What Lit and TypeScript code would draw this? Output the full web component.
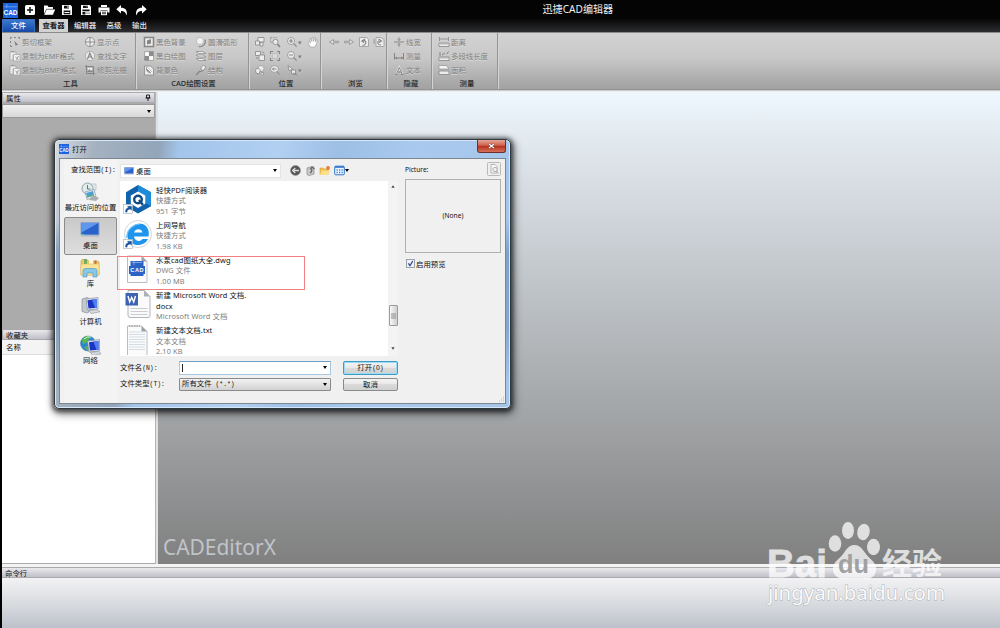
import { LitElement, html, css, svg } from "lit";
import { customElement } from "lit/decorators.js";

const icon = (w: number, h: number, body: unknown, box = `0 0 ${w} ${h}`) =>
  html`<svg width=${w} height=${h} viewBox=${box} fill="none">${body}</svg>`;

/* quick access bar, 12 x 12 white glyphs */
const quick = [
  svg`<rect x="1" y="1" width="10" height="10" rx="1.5" fill="#fff"/><path d="M6 3v6M3 6h6" stroke="#111" stroke-width="1.5"/>`,
  svg`<path d="M1 10V1.500h3.500l1 1.500H10V5H3.500z" fill="#fff"/><path d="M3.400 5.200H12.400L10 11H1z" fill="#fff" stroke="#111" stroke-width=".4"/>`,
  svg`<path d="M1 1h8.500L11 2.500V11H1z" fill="#fff"/><path d="M3 1.800h5v2.700H3zM2.700 6.500h6.600v3.800H2.700z" fill="#111"/><path d="M6.500 2h1v2h-1zM3.500 8h5v1h-5z" fill="#fff"/>`,
  svg`<path d="M1 1h8.500L11 2.500V11H1z" fill="#fff"/><path d="M3 1.800h5v2.200H3zM2.400 5.600h7.200v1.600H2.400zM2.400 8h3v2.400h-3z" fill="#111"/><path d="M6.500 2h1v1.600h-1zM6 8.500h4v1.500H6z" fill="#aaa"/>`,
  svg`<path d="M3 1h6v2H3zM.5 3.600h11v5H9.400V6.500H2.600v2.100H.5z" fill="#fff"/><path d="M3 7h6v4.200H3z" fill="#fff"/><path d="M4 8.200h4M4 9.700h4" stroke="#111" stroke-width=".8"/>`,
  svg`<path d="M5 1v2.700C9 3.700 11.800 6 10.700 11.500 9.500 8 8 6.900 5 6.900v2.700L.3 5.200z" fill="#fff"/>`,
  svg`<path d="M7 1v2.700C3 3.700.200 6 1.300 11.500 2.500 8 4 6.900 7 6.900v2.700l4.700-4.400z" fill="#fff"/>`,
];

const L = "#ececec";
const D = "#858585";
const g = {
  crop: svg`<path d="M1.500 3V1.500H3M5 1.500h2M9 1.500h1.500V3M1.500 5v2M1.500 9v1.500H3" stroke="${D}"/><path d="M4.500 3.500l6 6-2.500-.2L6.500 11z" fill="${D}" stroke="${L}" stroke-width=".5"/>`,
  copy: svg`<path d="M1 2h6v3H4v5H1z" fill="${L}" stroke="#999" stroke-width=".6"/><path d="M4.500 4.500h6.500V11H4.500z" fill="#f2f2f2" stroke="#999" stroke-width=".6"/><path d="M2 1.500h3M6.500 7l3 2.500M9.500 6l-2 4" stroke="#999"/>`,
  point: svg`<circle cx="6" cy="6" r="4.600" fill="${L}" stroke="${D}" stroke-width=".8"/><path d="M6 1v10M1 6h10" stroke="${D}" stroke-width=".9"/>`,
  find: svg`<circle cx="6" cy="6" r="4.700" fill="${L}" stroke="#999" stroke-width=".7"/><path d="M3.500 9L5.800 3l2.700 6M4.500 7h3" stroke="${D}" stroke-width="1.200"/>`,
  raster: svg`<path d="M2.500 1v8.500H11M1 2.500h8.500V11" stroke="${D}"/><path d="M4 4h4v4H4z" fill="${L}"/><path d="M3 8l2.500-3L7 7l1-1 1 2z" fill="${D}"/>`,
  black: svg`<path d="M1.500 1.500h9v9h-9z" fill="${L}" stroke="${D}" stroke-width="1.500"/><path d="M4 8.500V4.500L8 3v4.500z" fill="${D}"/>`,
  bw: svg`<path d="M1.500 1.500h9v9h-9z" fill="#f4f4f4" stroke="#a8a8a8"/><path d="M6 1.500h4.500V6H6zM1.500 6H6v4.500H1.500z" fill="#8c8c8c"/><path d="M3 3h2v2H3zM8 7h2v2H8z" fill="#fff"/>`,
  bg: svg`<path d="M1.500 2h6l3 3v6h-9z" fill="${L}" stroke="${D}" stroke-width=".8"/><path d="M3 3c2 0 2 2 4 3s2 2 1 3-4-1-5-3z" fill="#999"/><path d="M4 4l5 5" stroke="#fff"/>`,
  arc: svg`<circle cx="5" cy="5" r="3.600" fill="#f2f2f2" stroke="#b2b2b2" stroke-width=".8"/><path d="M10 3.500c1.500 4-2 8-6.500 7" stroke="${D}" stroke-width="1.100"/>`,
  layers: svg`<path d="M1 1.500h7l3 2H4zM1 5h7l3 2H4zM1 8.500h7l3 2H4z" fill="#f2f2f2" stroke="${D}" stroke-width=".7"/>`,
  struct: svg`<path d="M1 11l4-4M4 8l3-1 2-3" stroke="${D}" stroke-width="1.300"/><path d="M5.500 4l3-3 2.500 2-3 4z" fill="${L}" stroke="${D}" stroke-width=".8"/>`,
  sheets: svg`<path d="M4 1.500h6V6H4z" fill="${L}" stroke="${D}" stroke-width=".8"/><path d="M1.500 5h4v4h-4zM6 6.500h3V10H6z" fill="${L}" stroke="${D}" stroke-width=".8"/>`,
  sheets2: svg`<path d="M1.500 1.500h5v4h-5z" fill="${L}" stroke="${D}" stroke-width=".8"/><path d="M5 5h5.500v5.500H5z" fill="${L}" stroke="${D}" stroke-width=".8"/><path d="M8 1.500l2 2M3 7v2" stroke="${D}"/>`,
  turn: svg`<circle cx="7" cy="4.500" r="3" fill="${L}" stroke="#999" stroke-width=".7"/><path d="M1.500 6c1-2 3-2 5 0L5 10 2 9zM7 8l3 1-1 2" fill="${L}" stroke="${D}" stroke-width=".8"/>`,
  zoomBox: svg`<path d="M1.500 1.500h6v5h-6z" stroke="#999" stroke-dasharray="1.500 1"/><circle cx="6.500" cy="6" r="2.600" fill="${L}" stroke="${D}" stroke-width=".8"/><path d="M8.500 8l2.500 3" stroke="${D}" stroke-width="1.500"/>`,
  fit: svg`<path d="M3.500 3.500h5v5h-5z" fill="#d8d8d8" stroke="#aaa" stroke-width=".5"/><path d="M1.500 4V1.500H4M8 1.500h2.500V4M10.500 8v2.500H8M4 10.500H1.500V8" stroke="${D}" stroke-width="1.100"/>`,
  zoomPrev: svg`<ellipse cx="5.500" cy="5" rx="4" ry="3.400" fill="${L}" stroke="#999" stroke-width=".9"/><path d="M3.500 5h4M5 3.500L3.500 5 5 6.500M8 7.500l2.500 3" stroke="${D}"/>`,
  plus: svg`<circle cx="5" cy="5" r="3.500" fill="${L}" stroke="#999" stroke-width=".9"/><path d="M3 5h4M5 3v4M7.700 7.700l3 3" stroke="${D}" stroke-width="1.200"/>`,
  minus: svg`<circle cx="5" cy="5" r="3.500" fill="${L}" stroke="#999" stroke-width=".9"/><path d="M3 5h4M7.700 7.700l3 3" stroke="${D}" stroke-width="1.200"/>`,
  pick: svg`<path d="M2 1.500l5 4-4 1z" fill="${L}" stroke="${D}" stroke-width=".8"/><path d="M5.500 6h4v4h-4z" fill="${L}" stroke="${D}" stroke-width=".8"/><path d="M7 9l4 2" stroke="${D}"/>`,
  hand: svg`<path d="M3.500 11L1 6.500l1-.8L3.500 7 2.700 2.700l1.100-.3 1.100 3L5 1.300h1.200l.4 4 1-3.600 1.100.3-.3 4 1.300-2.600 1 .5L9.300 8 8 11z" fill="#fff" stroke="#999" stroke-width=".6"/>`,
  left: svg`<path d="M10.500 5.300H5.500V3.500L1.500 6l4 2.500V6.700h5z" fill="#dedede" stroke="${D}" stroke-width=".7"/>`,
  right: svg`<path d="M1.500 5.300h5V3.500l4 2.500-4 2.500V6.700h-5z" fill="#dedede" stroke="${D}" stroke-width=".7"/>`,
  rotL: svg`<path d="M1.500 1.500h7l2 2v7h-9z" fill="${L}" stroke="#999" stroke-width=".8"/><path d="M4.500 9.500C8 9 9 6 6.500 4.500L5 5M7 3L4 5l2 1.500" stroke="${D}" stroke-width="1.200"/>`,
  rotR: svg`<path d="M3 1.500h5l3 2v7H3z" fill="${L}" stroke="#999" stroke-width=".8"/><path d="M8 9C4 9 4 5 6.500 4.800M5.500 3l3 2-2.500 1.500" stroke="${D}" stroke-width="1.100"/><path d="M1 3v5" stroke="#999"/>`,
  lw: svg`<path d="M1 6h10M6 1.500v3M6 7.500v3" stroke="${D}" stroke-width="1.100"/><path d="M4.500 3L6 4.700 7.500 3M4.500 9L6 7.300 7.500 9" stroke="${D}" stroke-width=".6"/>`,
  meas: svg`<path d="M1.500 3v6.500M10.500 3v6.500M2 8h8" stroke="${D}"/><path d="M2 8l2-1.500v3zM10 8L8 6.500v3z" fill="${D}"/>`,
  text: svg`<path d="M3.500 10L6.300 3.500 9.200 10" stroke="${L}" stroke-width="2"/><path d="M3.500 10L6.300 3.500 9.200 10M4.600 8h3.600M2.500 10.500h2.200M7.800 10.500h2.700" stroke="${D}"/>`,
  dist: svg`<path d="M1.500 1v4M10.500 1v4M2 3h8" stroke="${D}" stroke-width=".8"/><path d="M1 7h10v3.500H1z" fill="${L}" stroke="${D}" stroke-width=".8"/><path d="M3 7v2M5 7v2M7 7v2M9 7v2" stroke="#999" stroke-width=".6"/>`,
  poly: svg`<path d="M2 6V2M4 5l3-2M9 4l1.500-2.500" stroke="${D}"/><path d="M1 7h10v3.500H1z" fill="${L}" stroke="${D}" stroke-width=".8"/><path d="M3 7v2M5 7v2M7 7v2M9 7v2" stroke="#999" stroke-width=".6"/>`,
  area: svg`<path d="M1 1.500h7.500L11 5H1z" fill="#f4f4f4" stroke="${D}" stroke-width=".6"/><path d="M1 7h10v3.500H1z" fill="${L}" stroke="${D}" stroke-width=".8"/>`,
};

type Cell = [keyof typeof g, string?] | null;
const groups: { name: string; cls: string; cells: Cell[] }[] = [
  { name: "工具", cls: "g1", cells: [["crop", "剪切框架"], ["point", "显示点"], ["copy", "复制为EMF格式"], ["find", "查找文字"], ["copy", "复制为BMP格式"], ["raster", "修剪光栅"]] },
  { name: "CAD绘图设置", cls: "g2", cells: [["black", "黑色背景"], ["arc", "圆滑弧形"], ["bw", "黑白绘图"], ["layers", "图层"], ["bg", "背景色"], ["struct", "结构"]] },
  { name: "位置", cls: "g3", cells: [["sheets"], ["zoomBox"], ["plus", "▾"], ["hand"], ["sheets2"], ["fit"], ["minus", "▾"], null, ["turn"], ["zoomPrev"], ["pick", "▾"], null] },
  { name: "浏览", cls: "g4", cells: [["left"], ["right"], ["rotL"], ["rotR"]] },
  { name: "隐藏", cls: "g5", cells: [["lw", "线宽"], ["meas", "测量"], ["text", "文本"]] },
  { name: "测量", cls: "g6", cells: [["dist", "距离"], ["poly", "多段线长度"], ["area", "面积"]] },
];

const monitor = svg`<path d="M1 1h18v12.500H1z" fill="#2a62cc" stroke="#8fa6c8"/><path d="M1.500 1.500h17L1.500 11z" fill="#5f96ee"/><path d="M1 14.500h18" stroke="#a9b6c8"/><path d="M2 13h2" stroke="#4ee08a"/>`;
const tower = svg`<path d="M2 3l5-1.500 2 1V16l-2 1-5-1.500z" fill="#c3c8cf" stroke="#7d848e" stroke-width=".6"/>`;
const crt = svg`<path d="M6 3l12-1.500V13L7.500 14z" fill="#e0e5ec" stroke="#8a919c" stroke-width=".7"/><path d="M7.500 4.200L17 3v8.800L8.500 12.600z" fill="#1a34c4"/><path d="M12 3.600l5-.6v8.800l-2 .2z" fill="#4f80f0"/><path d="M9 14.500l8-1 3 2.300-9 1.700z" fill="#d7dbe0" stroke="#8a919c" stroke-width=".6"/>`;
const places = [
  { name: "最近访问的位置", art: svg`<path d="M11 2h5v6h-5z" fill="#e4eaf0" stroke="#9aa4b0" stroke-width=".5"/><circle cx="7.500" cy="6.500" r="5.500" fill="#dfecea" stroke="#8fa3ad"/><path d="M7.500 3v4h3" stroke="#5c7a88"/><path d="M5 10l9-2.500 2 7-9 3z" fill="#e8eef4" stroke="#8d99a6" stroke-width=".7"/><path d="M6 11l7-2 1.200 4.500-7 2z" fill="#4e9ed8"/><path d="M6.800 14l6.500-1.800.4 1.300-6.500 2z" fill="#58b06a"/><path d="M13 13l6 3-3 3-7-1z" fill="#a9adb4"/>` },
  { name: "桌面", art: svg`<g transform="translate(0 1.500)">${monitor}</g>`, sel: true },
  { name: "库", art: svg`<path d="M1 3l1-1.500h5L8 3h9l2 1v13H1z" fill="#eccb68" stroke="#c39a38" stroke-width=".6"/><path d="M4 1h3v5H4z" fill="#6fae62"/><path d="M9 2h4v4H9z" fill="#fff6d8"/><path d="M14.500 2.500h2V6h-2z" fill="#c9644a"/><path d="M1 6h18v11H1z" fill="#f8e397" stroke="#d8b455" stroke-width=".5"/><path d="M3 19v-6q0-2.500 2.500-2.500h9q2.500 0 2.500 2.500v6h-4v-4H7v4z" fill="#86c8ea" stroke="#5194c0" stroke-width=".6"/>` },
  { name: "计算机", art: svg`${tower}${crt}` },
  { name: "网络", art: svg`<circle cx="8" cy="8.500" r="7.500" fill="#2f86cf" stroke="#3a6fa8" stroke-width=".5"/><path d="M2 5c2-4 6-5 9-3L8 5 6 8 3 9zM4 12l4-1 2 4-2 1z" fill="#59b947"/><path d="M4 4q3-3 7-2" stroke="#cdeaf8"/><g transform="translate(1.500 3)">${crt}</g>` },
];

const shortcut = svg`<rect x=".5" y="20.500" width="9" height="9" fill="#fff" stroke="#b0b8c0" stroke-width=".7"/><path d="M2.500 28c0-3 1-4 3-4.300l-1-1.500H8.500v4L7.200 25C5 25.500 4 26 4 28.300z" fill="#17509c" stroke="#17509c" stroke-width=".4"/>`;
const page = (y: number, h: number) => svg`<path d="M4.500 ${y}h14l5.500 5.500v${h - 5.5}H4.500z" fill="#fbfbfb" stroke="#a8adb4" stroke-width=".8"/><path d="M18.500 ${y}l5.500 5.500h-5.500z" fill="#9aa0a8"/>`;
const files = [
  { lines: ["轻快PDF阅读器"], meta: ["快捷方式", "951 字节"], art: svg`<path d="M15 1l13 7.300v14L15 29.500 3 22.500V8.300z" fill="#0f62ab"/><path d="M15 1l13 7.300v14l-6-3.500V12L15 8z" fill="#1d8bd8"/><path d="M15 7.500l7.300 4v8.200L15 24l-7.200-4.300v-8.200z" fill="#fff"/><circle cx="15" cy="15.500" r="3.800" stroke="#0f4a85" stroke-width="2.400"/><path d="M16 16l4 5" stroke="#0f4a85" stroke-width="2.400"/>${shortcut}` },
  { lines: ["上网导航"], meta: ["快捷方式", "1.98 KB"], art: svg`<circle cx="15" cy="15" r="13.500" fill="#fff" stroke="#c8ccd2" stroke-width=".8"/><path d="M25.500 17.500H11c.6 5 6.500 5.700 8.500 2.500h5.500C22 28 6 29 4.300 17 4 5 22-.5 25.300 11c.6 2.500.6 4 .2 6.500zM11 13.500h8.500c-.6-4.500-7.500-4.500-8.500 0z" fill="#1f94ec"/><path d="M3.800 19C3 10 12 5 17 5" stroke="#6cc4ff" stroke-width="1.200"/>${shortcut}` },
  { lines: ["水泵cad图纸大全.dwg"], meta: ["DWG 文件", "1.00 MB"], art: svg`${page(2, 26.5)}<path d="M7.500 7h13v15h-13z" fill="#2c62c4"/><path d="M9 8.500h10M11 7v4" stroke="#9fc0f2" stroke-width=".7"/><path d="M6 12h16v8H6z" fill="#2c62c4"/><text x="7.300" y="18.300" font-size="5.600" font-weight="700" fill="#fff" textLength="13.400" font-family="Liberation Sans">CAD</text>` },
  { lines: ["新建 Microsoft Word 文档.", "docx"], meta: ["Microsoft Word 文档"], art: svg`<path d="M5 1.500h16.500L27 7.500v19q0 2-2 2H7q-2 0-2-2z" fill="#fafafa" stroke="#a8adb4" stroke-width=".9"/><path d="M21 1.500v6h6z" fill="#aab0b8"/><path d="M7.500 19.500h17M7.500 22.500h17M7.500 25.500h17" stroke="#c4c8cc" stroke-width=".9"/><path d="M2.500 4h12.500v12.500H2.500z" fill="#3c63b4"/><path d="M5 7l1.700 6 2-4.500 2 4.500L12.500 7" stroke="#fff" stroke-width="1.400"/>` },
  { lines: ["新建文本文档.txt"], meta: ["文本文档", "2.10 KB"], art: svg`${page(2, 30)}<path d="M6 8h16M6 10.500h16M6 13h16M6 15.500h16M6 18h16M6 20.500h16M6 23h16M6 25.500h16" stroke="#c9d4e0" stroke-width=".8"/><path d="M6 2h11" stroke="#888" stroke-dasharray="1.500 1"/>` },
];

const cadLogo = (s: number) => icon(s, s, svg`<rect width="16" height="16" fill="#1c63dd"/><path d="M1 4h14M4 1v14" stroke="#79adff" stroke-width=".8"/><rect y="5.500" width="16" height="8" fill="#1c63dd"/><text x=".5" y="12.300" font-size="7.500" font-weight="700" textLength="15" lengthAdjust="spacingAndGlyphs" fill="#fff" font-family="Liberation Sans">CAD</text>`, "0 0 16 16");
const arrow = html`<i class="arrow"></i>`;

@customElement("app-root")
export class AppRoot extends LitElement {
  static styles = css`
    :host { display: block; position: relative; width: 1000px; height: 628px; overflow: hidden; background: #000; color: #111; font: 7.4px/10px "Noto Sans", "Noto Sans CJK SC", sans-serif; white-space: nowrap; }
    * { box-sizing: border-box; }
    svg { display: block; flex: none; }
    .app { display: flex; flex-direction: column; height: 628px; padding-left: 2px; }
    .title { display: grid; grid-template-columns: 152px 1fr; height: 19px; align-items: center; background: #040404; }
    .quick { display: flex; align-items: center; gap: 6.4px; padding: 1px 0 0 1px; }
    .caption { color: #eee; font-size: 10.1px; line-height: 19px; padding-left: 388.5px; }
    .tabs { display: flex; height: 13px; background: linear-gradient(#070707, #2c2d30); color: #e8e8e8; line-height: 13px; font-weight: 500; }
    .tab { text-align: center; }
    .file { width: 33px; background: linear-gradient(#3b78d0, #1549a4); color: #fff; border: 1px solid #3a6fc0; border-bottom: 0; line-height: 11.500px; }
    .current { width: 29px; margin-left: 4px; background: #d2d2d2; color: #222; font-weight: 700; }
    .t3 { width: 34px; } .t4 { width: 24px; } .t5 { width: 27px; }
    .ribbon { display: flex; height: 57px; background: linear-gradient(#d3d3d3, #c8c8c8 45%, #a9a9a9 88%, #a2a2a2); border-top: 1px solid #8a8a8a; }
    .group { display: flex; flex-direction: column; justify-content: space-between; border-right: 1px solid #959595; box-shadow: 1px 0 #d4d4d4; padding-top: 2px; }
    .cells { display: grid; grid-auto-rows: 14px; align-items: center; color: #7f7f7f; }
    .cell { display: flex; align-items: center; gap: 1px; text-shadow: 0 .5px #ddd; }
    .name { text-align: center; color: #2a2a2a; line-height: 11px; font-weight: 500; }
    .g1 { width: 134px; } .g1 .cells { grid-template-columns: 75px 1fr; padding-left: 7px; letter-spacing: .1px; } .g1 .name { padding-left: 4px; }
    .g2 { width: 113px; } .g2 .cells { grid-template-columns: 52px 1fr; padding-left: 7px; } .g2 .name { padding-left: 3px; }
    .g3 { width: 72px; } .g3 .cells { grid-template-columns: 15px 17px 21px 12px; padding-left: 5px; } .g3 .name { padding-left: 3px; }
    .g4 { width: 66px; } .g4 .cells { grid-template-columns: repeat(4, 15px); padding-left: 7px; } .g4 .name { padding-left: 4px; }
    .g5 { width: 45px; } .g5 .cells { padding-left: 6px; } .g5 .name { padding-left: 4px; }
    .g6 { width: 66px; } .g6 .cells { padding-left: 6px; } .g6 .name { padding-left: 5px; }
    .g3 .cell { gap: 0; }
    .edge { height: 3px; background: linear-gradient(#777, #eee 70%); }
    .body { display: flex; height: 472px; background: #dfe1e4; }
    .side { display: flex; flex-direction: column; width: 154px; border-right: 1px solid #b4b4b4; background: #ababab; }
    .bar { display: flex; justify-content: space-between; align-items: center; height: 11px; padding: 0 3px; border: 1px solid #a9a9ae; background: linear-gradient(#e9e9ed, #bfc0c8); flex: none; }
    .drop { display: flex; align-items: center; justify-content: flex-end; height: 14px; margin-top: 1px; padding-right: 3px; border: 1px solid #999; background: linear-gradient(#f0f0f0, #d8d8d8); }
    .arrow { display: block; width: 0; height: 0; border: 2.5px solid transparent; border-top: 3px solid #000; border-bottom: 0; }
    .props { height: 211px; }
    .cols { height: 15px; padding: 2px 4px; background: #f4f4f5; border-bottom: 1px solid #dcdcdc; }
    .favs { flex: 1; background: #fff; border-bottom: 1px solid #aaa; }
    .canvas { display: flex; flex: 1; margin-left: 2px; align-items: flex-end; padding: 0 5px 2px; background: linear-gradient(#eff8ff, #dfe6ec 12%, #808080); color: #c0c4c9; font-size: 22.5px; line-height: 30px; }
    .brand { transform: scaleX(.93); transform-origin: left; }
    .cmdbar { height: 11px; border-width: 1px 0; }
    .cmd { flex: 1; background: linear-gradient(#f2f2f4, #d9dcdf 50%, #bdc1cb); }
    .split { height: 3px; background: #f4f4f4; }

    .dialog { position: absolute; left: 54px; top: 139px; width: 457px; height: 270px; border: 1px solid #30383f; border-radius: 5px; padding: 0 4px 4px; background: linear-gradient(#0000 30%, #5a84b088 42%, #6a90b888 70%, #9fc4ea00 90%), linear-gradient(100deg, #d5dbe2 0, #a5b2c0 8%, #92a5ba 21%, #a3c5ea 25%, #b1d0f2 45%, #9dbfe4 57%, #a9caee 72%, #a4c4e8 100%); box-shadow: inset 0 0 0 1px #d5e7f8, 0 1px 4px 2px #0008, 1px 3px 9px 2px #0007; display: flex; flex-direction: column; }
    .dtitle { display: flex; justify-content: space-between; height: 18px; flex: none; }
    .dname { display: flex; align-items: center; gap: 3px; padding-bottom: 1px; }
    .close { display: flex; align-items: center; justify-content: center; width: 29px; height: 13px; border: 1px solid #6b3030; border-top: 0; border-radius: 0 0 3px 3px; background: linear-gradient(#e4a898, #d0604c 45%, #b5301b 50%, #d5715a); }
    .client { flex: 1; display: grid; grid-template-columns: 54px 286px 1fr; border: 1px solid #7c8791; background: #f0f0f0; padding-left: 4px; min-height: 0; }
    .left { display: flex; flex-direction: column; background: #f3f3f4; width: 54px; }
    .look { height: 19.500px; line-height: 20px; padding-left: 7px; }
    .mono { font-family: "Liberation Mono", monospace; font-size: 6.4px; }
    .place { display: flex; flex-direction: column; align-items: center; width: 53px; height: 38.3px; padding-top: 2px; border: 1px solid transparent; border-radius: 2px; }
    .place.sel { border-color: #8c8c8c; background: linear-gradient(#c9c9c9, #dedede); }
    .mid { display: flex; flex-direction: column; padding-left: 2px; }
    .top { display: flex; align-items: center; height: 22px; padding-top: 1px; }
    .where { display: flex; align-items: center; gap: 2px; width: 161px; height: 14px; background: #fff; border: 1px solid #e2e4e8; padding: 0 3px; }
    .where .arrow { margin-left: auto; }
    .tools { display: flex; align-items: center; gap: 3.500px; padding-left: 9px; }
    .more { margin-left: -3px; }
    .listing { display: flex; height: 175px; width: 278px; }
    .files { width: 268px; background: #fff; overflow: hidden; padding: 2.500px 0 0 3px; letter-spacing: .08px; }
    .item { display: flex; height: 35.2px; gap: 3px; }
    .words { line-height: 10.5px; padding-top: 1px; }
    .meta { color: #808080; }
    .scroll { width: 10px; background: #f3f3f3; display: flex; flex-direction: column; align-items: center; padding: 4px 0; }
    .scroll .arrow { transform: scale(.8); border-top-color: #444; }
    .scroll .up { transform: scale(.8) rotate(180deg); }
    .thumb { width: 9px; height: 21px; margin: 117px 0 21px; border: 1px solid #9a9a9a; border-radius: 1px; background: linear-gradient(90deg, #f8f8f8, #cfcfcf); display: flex; align-items: center; justify-content: center; }
    .form { display: grid; grid-template-columns: 59px 152px 55px; row-gap: 3px; padding-top: 5px; align-items: center; }
    .form button { margin-left: 12px; width: 55px; }
    .field { height: 13.500px; display: flex; align-items: center; justify-content: space-between; padding: 0 3px 0 2px; background: #fff; border: 1px solid #a9c8e4; border-top-color: #6d9ec8; }
    .type { background: linear-gradient(#f2f2f2, #d2d2d2); border-color: #8a8a8a; border-radius: 1px; }
    .ext { margin-left: 2px; }
    .caret { width: 1px; height: 8px; background: #222; }
    button { font: inherit; color: #111; height: 13.500px; padding: 0; border: 1px solid #8a8a8a; border-radius: 2px; background: linear-gradient(#f4f4f4, #e8e8e8 48%, #dadada 50%, #d0d0d0); line-height: 10px; }
    button.ok { border-color: #3c9cc8; box-shadow: inset 0 0 0 1px #9bdcf4; }
    .preview { display: flex; flex-direction: column; width: 97px; padding: 3px 0 0 1px; font-size: 6.6px; }
    .phead { display: flex; justify-content: space-between; height: 17px; line-height: 15px; }
    .none { display: flex; align-items: center; justify-content: center; height: 74px; width: 96px; border: 1px solid #b0b0b0; }
    .check { display: flex; align-items: center; gap: 1px; padding: 5.500px 0 0 1px; font-size: 7.4px; }
    .mark { position: absolute; left: 117px; top: 256px; width: 188px; height: 34px; border: 1px solid #f28080; }
    .grip { position: absolute; right: 5px; bottom: 5px; }
    .water { position: absolute; left: 760px; top: 515px; }
  `;

  render() {
    return html`
      <div class="app">
        <div class="title">
          <div class="quick">${cadLogo(15)}${quick.map((q) => icon(12, 12, q, "0 0 12 12"))}</div>
          <div class="caption">迅捷CAD编辑器</div>
        </div>
        <div class="tabs">
          <div class="tab file">文件</div><div class="tab current">查看器</div><div class="tab t3">编辑器</div><div class="tab t4">高级</div><div class="tab t5">输出</div>
        </div>
        <div class="ribbon">
          ${groups.map((r) => html`<div class="group ${r.cls}">
            <div class="cells">${r.cells.map((c) => html`<div class="cell">${c ? html`${icon(12, 12, g[c[0]])}${c[1] ?? ""}` : ""}</div>`)}</div>
            <div class="name">${r.name}</div>
          </div>`)}
        </div>
        <div class="edge"></div>
        <div class="body">
          <div class="side">
            <div class="bar">属性${icon(6, 7, svg`<path d="M1.500 1h3v3h-3zM.5 4h5M3 4v3" stroke="#222"/>`)}</div>
            <div class="drop">${arrow}</div>
            <div class="props"></div>
            <div class="bar">收藏夹</div>
            <div class="cols">名称</div>
            <div class="favs"></div>
          </div>
          <div class="canvas"><span class="brand">CADEditorX</span></div>
        </div>
        <div class="split"></div>
        <div class="bar cmdbar">命令行</div>
        <div class="cmd"></div>
      </div>

      <div class="dialog">
        <div class="dtitle">
          <div class="dname">${cadLogo(10)}打开</div>
          <div class="close">${icon(7, 6, svg`<path d="M1 1l5 4M6 1L1 5" stroke="#5a3030" stroke-width="2.200"/><path d="M1 1l5 4M6 1L1 5" stroke="#fff" stroke-width="1.300"/>`)}</div>
        </div>
        <div class="client">
          <div class="left">
            <div class="look">查找范围<span class="mono">(I):</span></div>
            ${places.map((p) => html`<div class="place ${p.sel ? "sel" : ""}">${icon(21, 20, p.art)}<span>${p.name}</span></div>`)}
          </div>
          <div class="mid">
            <div class="top">
              <div class="where">${icon(10, 8, monitor, "0 0 20 16")}桌面${arrow}</div>
              <div class="tools">
                ${icon(11, 11, svg`<circle cx="5.500" cy="5.500" r="5" fill="#555" stroke="#999" stroke-width=".7"/><path d="M9 5.500H3M5.300 3L2.700 5.500 5.300 8" stroke="#ddd" stroke-width="1.300"/>`)}
                ${icon(11, 11, svg`<path d="M2 3l5-1.500 2 .5v7l-5 1.500-2-1z" fill="#c9c9c9" stroke="#888" stroke-width=".7"/><path d="M5 8c2-1 2-3 1.700-4.500M5 4.500L7 2l2.500 2" stroke="#666" stroke-width="1.200"/>`)}
                ${icon(11, 11, svg`<path d="M1 3h3l1 1h4v5.500H1z" fill="#f2c14e" stroke="#c79534" stroke-width=".5"/><path d="M2.500 5.500H11l-2 4.500H1z" fill="#fbe08a"/><circle cx="9" cy="3" r="1.900" fill="#f07a2c"/>`)}
                ${icon(11, 11, svg`<rect x=".7" y="1.200" width="9.600" height="8.600" rx="1" fill="#eef5ff" stroke="#2d74c8"/><path d="M1 2h9" stroke="#2d74c8" stroke-width="1.600"/><path d="M2.500 5h1.300M5 5h1.300M7.500 5h1.300M2.500 7.500h1.300M5 7.500h1.300M7.500 7.500h1.300" stroke="#3b8ad8" stroke-width="1.400"/>`)}
                <span class="more">${arrow}</span>
              </div>
            </div>
            <div class="listing">
              <div class="files">
                ${files.map((f) => html`<div class="item">${icon(30, 31, f.art)}<div class="words">${f.lines.map((l) => html`<div>${l}</div>`)}${f.meta.map((l) => html`<div class="meta">${l}</div>`)}</div></div>`)}
              </div>
              <div class="scroll"><i class="arrow up"></i><div class="thumb">${icon(5, 6, svg`<path d="M0 1h5M0 3h5M0 5h5" stroke="#777" stroke-width=".8"/>`)}</div>${arrow}</div>
            </div>
            <div class="form">
              <span>文件名<span class="mono">(N):</span></span><div class="field"><i class="caret"></i>${arrow}</div><button class="ok">打开<span class="mono">(O)</span></button>
              <span>文件类型<span class="mono">(T):</span></span><div class="field type"><span>所有文件 <span class="mono ext">(*.*)</span></span>${arrow}</div><button>取消</button>
            </div>
          </div>
          <div class="preview">
            <div class="phead">Picture:${icon(14, 14, svg`<rect x=".5" y=".5" width="13" height="13" rx="1" fill="#eee" stroke="#b9b9b9"/><path d="M4 2.500h4l2 2V11H4z" fill="#f8f8f8" stroke="#a5a5a5" stroke-width=".8"/><circle cx="8" cy="7.500" r="2.200" fill="#eee" stroke="#a5a5a5" stroke-width=".8"/><path d="M9.500 9.500l2 2" stroke="#a5a5a5"/>`)}</div>
            <div class="none">(None)</div>
            <div class="check">${icon(9, 9, svg`<rect x=".5" y=".5" width="8" height="8" fill="#eef1f6" stroke="#8a8f96" stroke-width=".8"/><path d="M2.300 4.300L4 6.500 6.800 2" stroke="#34499c" stroke-width="1.300"/>`)}启用预览</div>
          </div>
        </div>
        <div class="grip">${icon(7, 7, svg`<path d="M5 1h1M3 3h1M5 3h1M1 5h1M3 5h1M5 5h1" stroke="#bbb"/>`)}</div>
      </div>
      <div class="mark"></div>

      <div class="water">
        ${icon(200, 100, svg`<g fill="#fff" opacity=".74">
          <text x="7" y="61.500" font-size="39" font-weight="700" textLength="60" lengthAdjust="spacingAndGlyphs" font-family="Liberation Sans" stroke="#fff" stroke-width=".8">Bai</text>
          <ellipse cx="75" cy="28.500" rx="6.300" ry="8.300"/><ellipse cx="88" cy="15.500" rx="6" ry="8.500"/><ellipse cx="103.500" cy="17" rx="6.200" ry="8.300" transform="rotate(12 103.500 17)"/><ellipse cx="113.500" cy="32" rx="6.500" ry="8.300"/>
          <path d="M94.500 30c7 0 9 7 14 12 5 4.500 8.500 8 7.500 14-1 7-7 8-12 7.500-6-.6-13-.6-19 0-6 .5-11-2-12-8-.8-6 3-9.500 7-13 5-4.500 7-12.500 14.500-12.500z"/>
          <text x="122" y="58.500" font-size="30" font-weight="700" textLength="60" font-family="Noto Sans CJK SC">经验</text>
        </g>
        <text x="8" y="85" font-size="20.500" textLength="177" lengthAdjust="spacingAndGlyphs" font-family="Noto Sans" fill="#fafafa" stroke="#a9acb2" stroke-width=".9" paint-order="stroke">jingyan.baidu.com</text>
        <text x="78" y="57.500" font-size="26" font-weight="700" textLength="31" lengthAdjust="spacingAndGlyphs" fill="#a0a1a3" font-family="Liberation Sans">du</text>`)}
      </div>
    `;
  }
}
